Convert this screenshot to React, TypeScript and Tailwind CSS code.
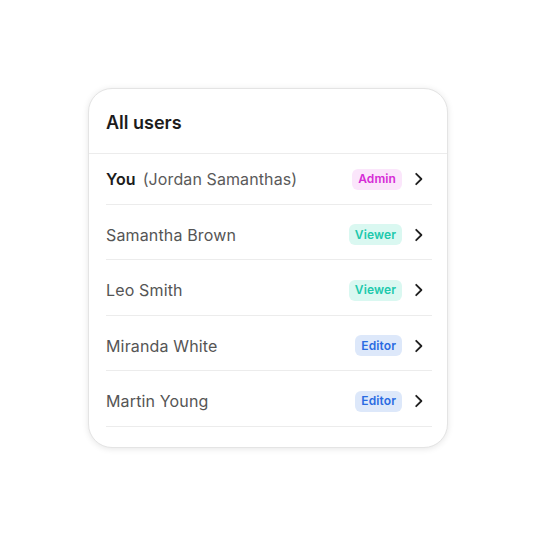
import React from "react";

type Role = "Admin" | "Viewer" | "Editor";

const badgeClass: Record<Role, string> = {
  Admin: "bg-[#fbe6fb] text-[#d62bd6]",
  Viewer: "bg-[#daf8f1] text-[#20c9ac]",
  Editor: "bg-[#dde8fa] text-[#2a6be2]",
};

function Chevron() {
  return (
    <svg width="10" height="14" viewBox="0 0 10 14" className="ml-[12px] mr-[8px] shrink-0">
      <polyline points="2.2,1.8 7.4,7 2.2,12.2" fill="none" stroke="#1f1f1f" strokeWidth="1.8" strokeLinecap="round" strokeLinejoin="round" />
    </svg>
  );
}

function Badge({ role }: { role: Role }) {
  return (
    <span className={`h-[21px] px-[6px] rounded-[6px] flex items-center text-[12px] font-semibold tracking-[0.1px] ${badgeClass[role]}`}>
      {role}
    </span>
  );
}

const users: { name: string; role: Role; h: string }[] = [
  { name: "Samantha Brown", role: "Viewer", h: "h-[55px]" },
  { name: "Leo Smith", role: "Viewer", h: "h-[56px]" },
  { name: "Miranda White", role: "Editor", h: "h-[55px]" },
  { name: "Martin Young", role: "Editor", h: "h-[56px]" },
];

export default function App() {
  return (
    <div className="w-[538px] h-[538px] bg-white pl-[88px] pt-[88px]" style={{ fontFamily: "Inter, 'Noto Sans', sans-serif" }}>
      <div className="w-[360px] h-[360px] rounded-[24px] border border-[#e4e4e4] bg-white shadow-[0_1px_6px_rgba(0,0,0,0.10)] flex flex-col">
        <div className="h-[65px] border-b border-[#ececec] flex items-center pl-[17px] pt-[2px]">
          <span className="text-[18px] font-semibold text-[#1c1c1c] tracking-[0px]">All users</span>
        </div>
        <div className="pl-[17px] pr-[15px]">
          <div className="h-[51px] border-b border-[#ececec] flex items-center">
            <span className="text-[16px] font-semibold text-[#1c1c1c] tracking-[0.1px]">You</span>
            <span className="text-[16px] text-[#5a5a5a] ml-[7px] tracking-[0.1px]">(Jordan Samanthas)</span>
            <div className="flex-1" />
            <Badge role="Admin" />
            <Chevron />
          </div>
          {users.map((u) => (
            <div key={u.name} className={`${u.h} pt-[5px] border-b border-[#ececec] flex items-center`}>
              <span className="text-[16px] text-[#555555] tracking-[0.15px]">{u.name}</span>
              <div className="flex-1" />
              <Badge role={u.role} />
              <Chevron />
            </div>
          ))}
        </div>
      </div>
    </div>
  );
}
